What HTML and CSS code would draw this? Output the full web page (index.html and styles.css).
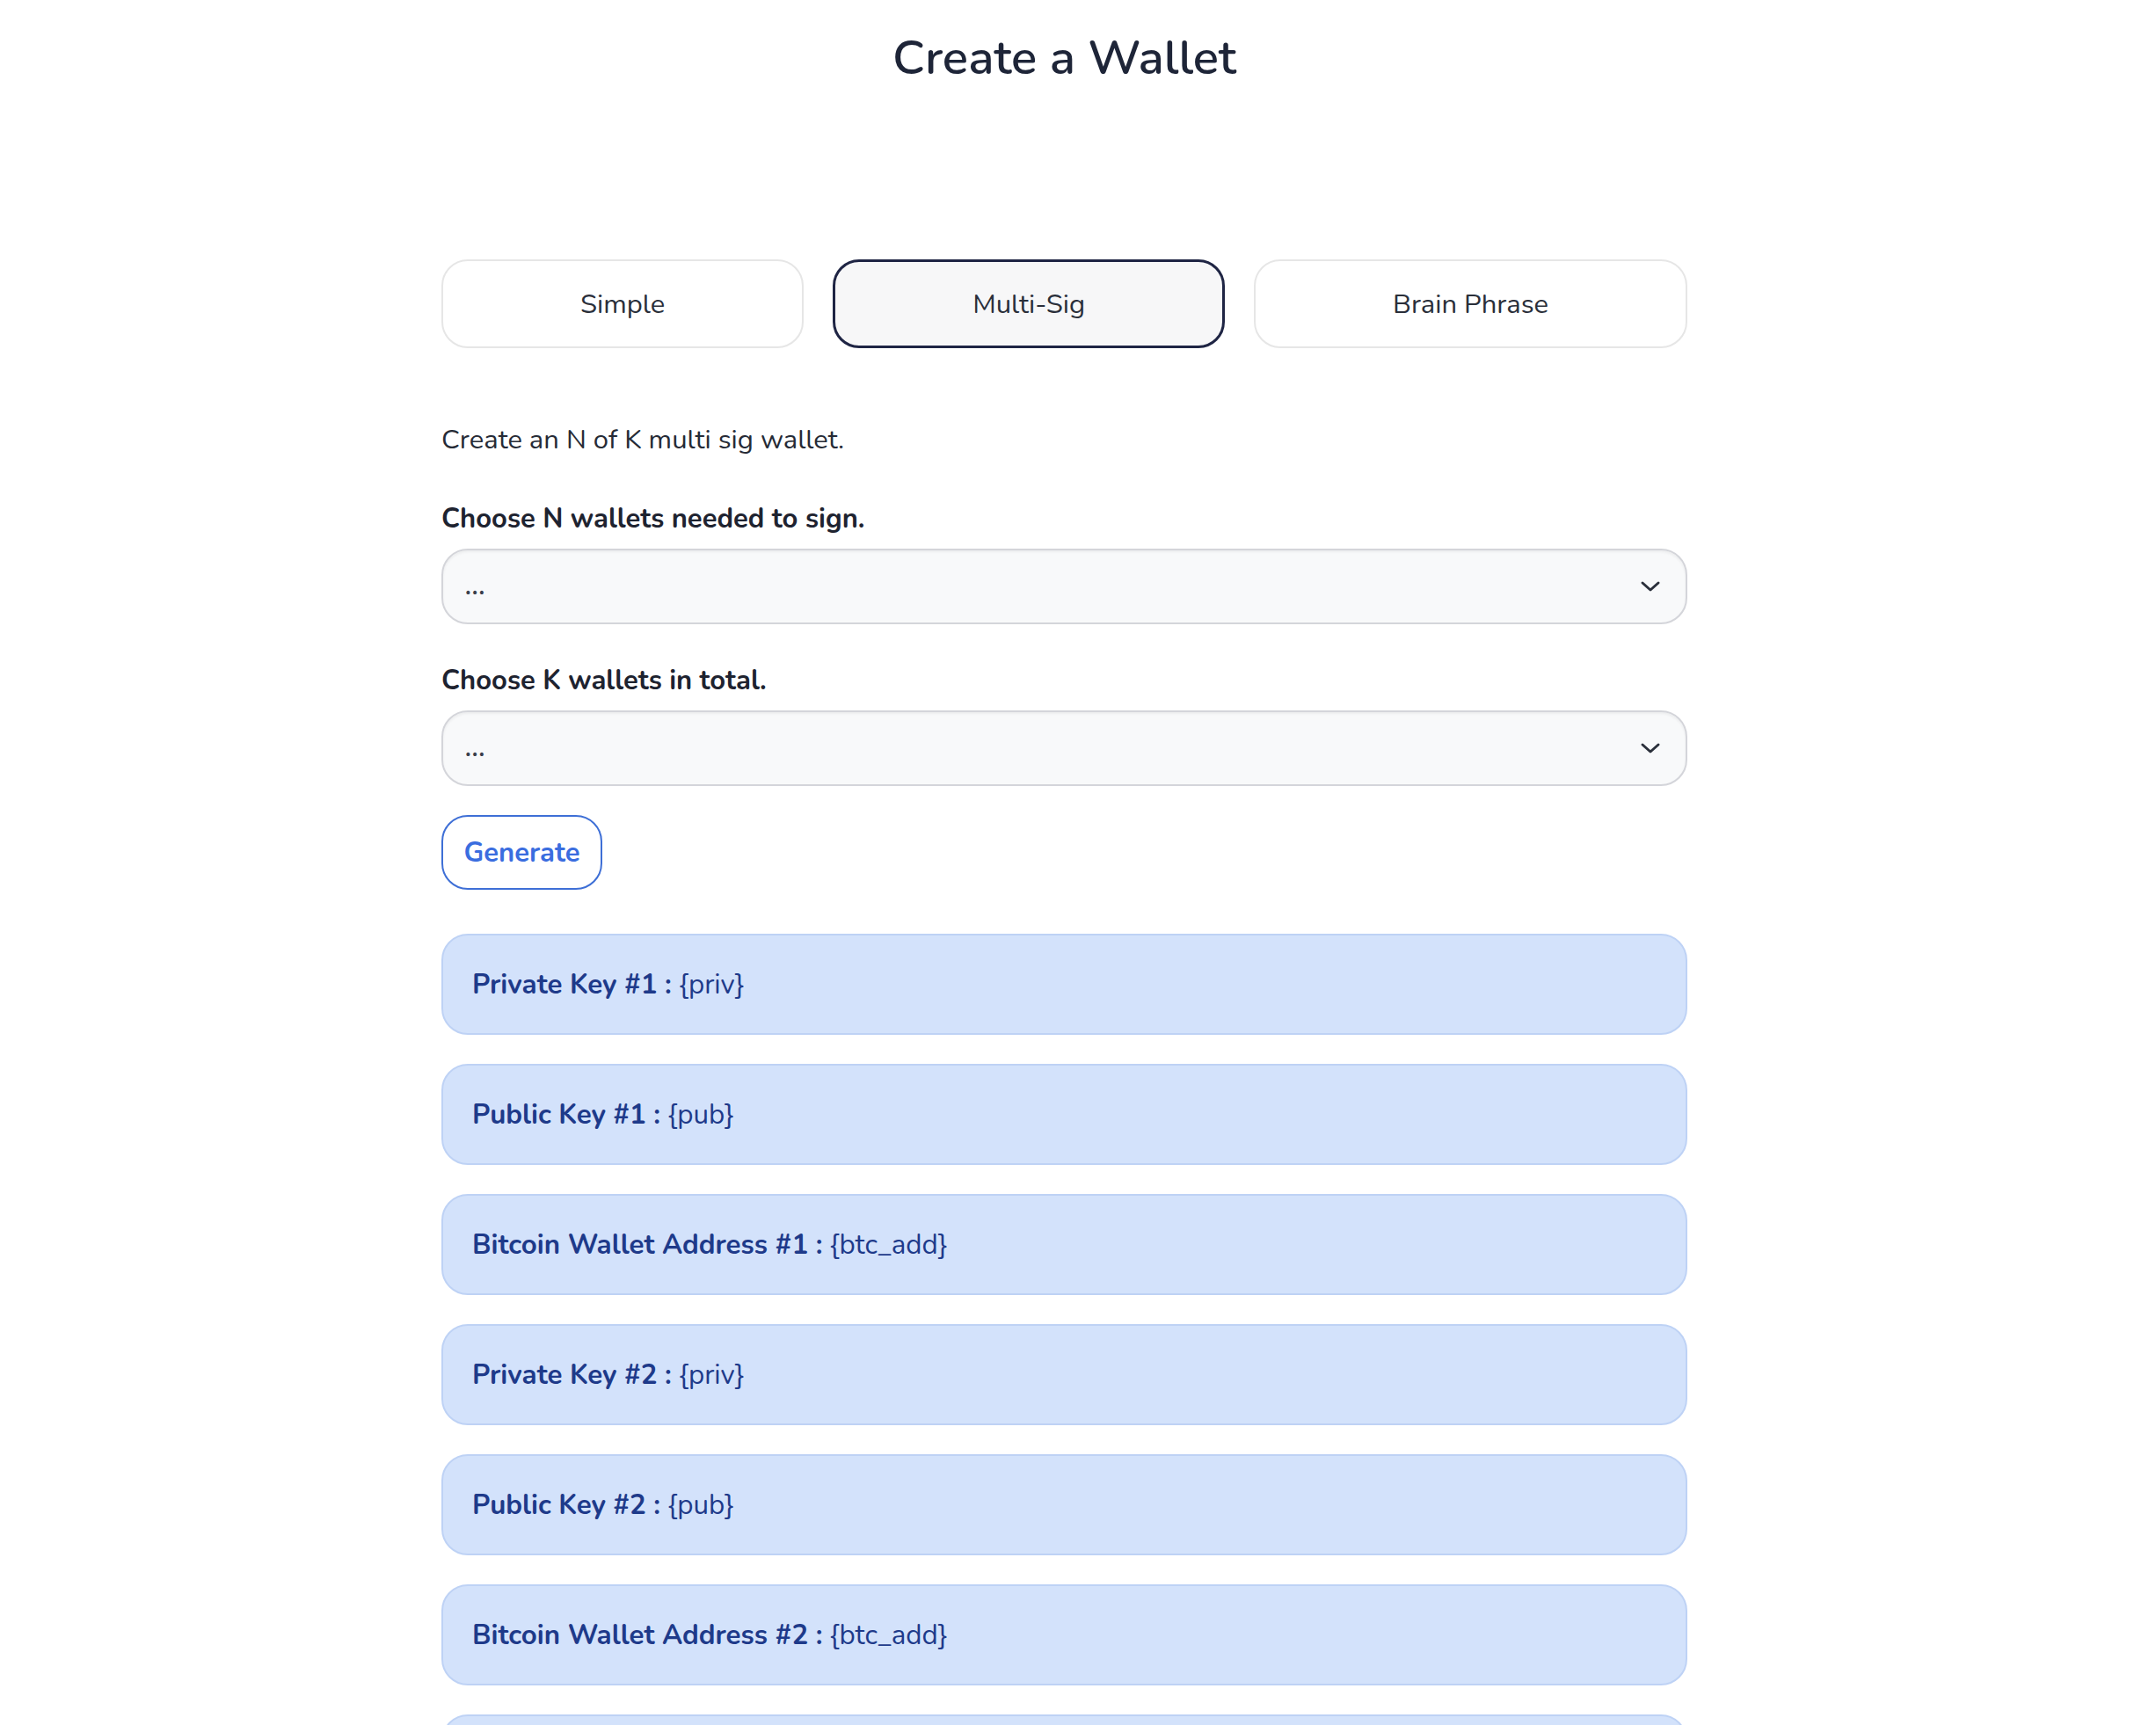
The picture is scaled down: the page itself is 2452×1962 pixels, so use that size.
FILE: index.html
```html
<!DOCTYPE html>
<html lang="en">
<head>
<meta charset="utf-8">
<title>Create a Wallet</title>
<link rel="stylesheet" href="styles.css">
</head>
<body>
<main class="page">
  <h1 class="title">Create a Wallet</h1>
  <nav class="tabs">
    <button class="tab">Simple</button>
    <button class="tab tab-active">Multi-Sig</button>
    <button class="tab">Brain Phrase</button>
  </nav>
  <p class="desc">Create an N of K multi sig wallet.</p>
  <label class="label">Choose N wallets needed to sign.</label>
  <div class="select">
    <span class="select-value">...</span>
    <svg class="chevron" width="24" height="14" viewBox="0 0 24 14"><path d="M3 3 L12 11 L21 3" fill="none" stroke="#2b303b" stroke-width="3" stroke-linecap="round" stroke-linejoin="round"/></svg>
  </div>
  <label class="label">Choose K wallets in total.</label>
  <div class="select">
    <span class="select-value">...</span>
    <svg class="chevron" width="24" height="14" viewBox="0 0 24 14"><path d="M3 3 L12 11 L21 3" fill="none" stroke="#2b303b" stroke-width="3" stroke-linecap="round" stroke-linejoin="round"/></svg>
  </div>
  <button class="generate">Generate</button>
  <section class="results">
    <div class="result"><b>Private Key #1 :</b> {priv}</div>
    <div class="result"><b>Public Key #1 :</b> {pub}</div>
    <div class="result"><b>Bitcoin Wallet Address #1 :</b> {btc_add}</div>
    <div class="result"><b>Private Key #2 :</b> {priv}</div>
    <div class="result"><b>Public Key #2 :</b> {pub}</div>
    <div class="result"><b>Bitcoin Wallet Address #2 :</b> {btc_add}</div>
    <div class="result"><b>Private Key #3 :</b> {priv}</div>
    <div class="result"><b>Public Key #3 :</b> {pub}</div>
    <div class="result"><b>Bitcoin Wallet Address #3 :</b> {btc_add}</div>
  </section>
</main>
</body>
</html>
```
FILE: styles.css
```css
* { box-sizing: border-box; }
html, body { margin: 0; padding: 0; background: #ffffff; }
body {
  font-family: "Nunito", "Lato", "Open Sans", sans-serif;
  color: #1f2433;
}
.page {
  width: 1417px;
  margin-left: 502px;
  display: flex;
  flex-direction: column;
  align-items: stretch;
}
.title {
  margin: 0;
  padding-top: 26px;
  line-height: 80px;
  font-size: 54.5px;
  font-weight: 600;
  text-align: center;
  color: #1e2538;
}
.tabs {
  margin-top: 189px;
  display: flex;
  gap: 33px;
}
.tab {
  flex: 1 1 auto;
  height: 101px;
  border: 2px solid #e6e6e6;
  border-radius: 30px;
  background: #ffffff;
  font-family: inherit;
  font-size: 31px;
  color: #2a2f3a;
  padding: 0;
}
.tab-active {
  border: 3px solid #1f2544;
  background: #f7f7f8;
}
.desc {
  margin: 84px 0 0;
  line-height: 40px;
  font-size: 31px;
  color: #262b36;
}
.label {
  display: block;
  margin-top: 50px;
  line-height: 40px;
  font-size: 31px;
  font-weight: 700;
  color: #1e2330;
}
.select + .label { margin-top: 44px; }
.select {
  margin-top: 14px;
  height: 86px;
  border: 2px solid #d4d5da;
  border-radius: 30px;
  background: #f8f9fa;
  box-shadow: inset 0 2px 3px rgba(0,0,0,0.05);
  display: flex;
  align-items: center;
  justify-content: space-between;
  padding: 0 28px 0 25px;
}
.select-value {
  font-size: 27px;
  font-weight: 700;
  color: #3a3f4a;
  letter-spacing: 1px;
}
.chevron { display: block; }
.generate {
  align-self: flex-start;
  margin-top: 33px;
  width: 183px;
  height: 85px;
  border: 2px solid #3e6fd6;
  border-radius: 30px;
  background: #ffffff;
  color: #3a6ddf;
  font-family: inherit;
  font-size: 31px;
  font-weight: 700;
  padding: 0;
}
.results {
  margin-top: 50px;
  display: flex;
  flex-direction: column;
  gap: 33px;
}
.result {
  height: 115px;
  border: 2px solid #bed2f5;
  border-radius: 30px;
  background: #d3e2fb;
  color: #1e3a8a;
  font-size: 31.3px;
  display: flex;
  align-items: center;
  padding-left: 33px;
  white-space: pre;
}
.result b { font-weight: 700; }
```
